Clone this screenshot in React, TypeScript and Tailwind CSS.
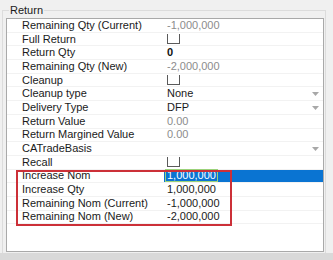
import { ReactNode } from "react";

type Row = {
  label: string;
  value?: string;
  kind?: "text" | "muted" | "bold" | "check" | "combo" | "selected";
};

const rows: Row[] = [
  { label: "Remaining Qty (Current)", value: "-1,000,000", kind: "muted" },
  { label: "Full Return", kind: "check" },
  { label: "Return Qty", value: "0", kind: "bold" },
  { label: "Remaining Qty (New)", value: "-2,000,000", kind: "muted" },
  { label: "Cleanup", kind: "check" },
  { label: "Cleanup type", value: "None", kind: "combo" },
  { label: "Delivery Type", value: "DFP", kind: "combo" },
  { label: "Return Value", value: "0.00", kind: "muted" },
  { label: "Return Margined Value", value: "0.00", kind: "muted" },
  { label: "CATradeBasis", value: "", kind: "combo" },
  { label: "Recall", kind: "check" },
];

const boxed: Row[] = [
  { label: "Increase Nom", value: "1,000,000", kind: "selected" },
  { label: "Increase Qty", value: "1,000,000" },
  { label: "Remaining Nom (Current)", value: "-1,000,000" },
  { label: "Remaining Nom (New)", value: "-2,000,000" },
];

const Arrow = () => (
  <svg width="7" height="4" viewBox="0 0 7 4" className="absolute right-[4px] top-[5px]">
    <path d="M0 0H7L3.5 4Z" fill="#a8a8a8" />
  </svg>
);

const Value = ({ row }: { row: Row }) => {
  let content: ReactNode = null;
  switch (row.kind) {
    case "check":
      return (
        <div className="relative flex-1 h-full">
          <div className="absolute left-[3px] top-[1px] w-[13px] h-[10px] border-l border-r border-b border-[#5a5a5a]" />
        </div>
      );
    case "selected":
      return (
        <div className="flex-1 h-full bg-[#0a74d2] flex items-center pl-[2px]">
          <span className="text-white leading-[11px] outline outline-1 outline-[#9bd27a] px-[1px]">{row.value}</span>
        </div>
      );
    case "muted":
      content = <span className="text-[#8c8c8c]">{row.value}</span>;
      break;
    case "bold":
      content = <span className="text-[#111] font-bold">{row.value}</span>;
      break;
    case "combo":
      content = (
        <>
          <span className="text-[#1a1a1a]">{row.value}</span>
          <Arrow />
        </>
      );
      break;
    default:
      content = <span className="text-[#1a1a1a]">{row.value}</span>;
  }
  return <div className="relative flex-1 h-full flex items-center pl-[3px]">{content}</div>;
};

const GridRow = ({ row }: { row: Row }) => (
  <div className="flex h-[13.7px] border-b border-[#f2f2f2] text-[11px] leading-[13px]">
    <div className="w-[157px] shrink-0 pl-[15px] flex items-center text-[#1a1a1a] whitespace-nowrap">
      {row.label}
    </div>
    <Value row={row} />
  </div>
);

export default function App() {
  return (
    <div
      className="w-[333px] h-[260px] bg-[#f0f0f0] flex flex-col overflow-hidden"
      style={{ fontFamily: '"Liberation Sans", Arial, sans-serif' }}
    >
      <div className="relative flex-1 mt-[10px] ml-[2px] mr-[7px] border-t border-r border-l border-[#dcdcdc]">
        <span className="absolute -top-[7px] left-[6px] bg-[#f0f0f0] px-[1px] text-[11px] leading-[13px] text-[#1a1a1a]">
          Return
        </span>
        <div className="mt-[7px] ml-[3px] mr-[1px] h-[234px] bg-white border border-[#a9a9a9] pt-[0px]">
          {rows.map((r) => (
            <GridRow key={r.label} row={r} />
          ))}
          <div className="relative">
            {boxed.map((r) => (
              <GridRow key={r.label} row={r} />
            ))}
            <div className="absolute left-[9px] top-[0px] w-[216px] h-[56px] border-2 border-[#cc3038] pointer-events-none" />
          </div>
        </div>
      </div>
      <div className="h-[7px] bg-[#d9d9d9]" />
    </div>
  );
}
